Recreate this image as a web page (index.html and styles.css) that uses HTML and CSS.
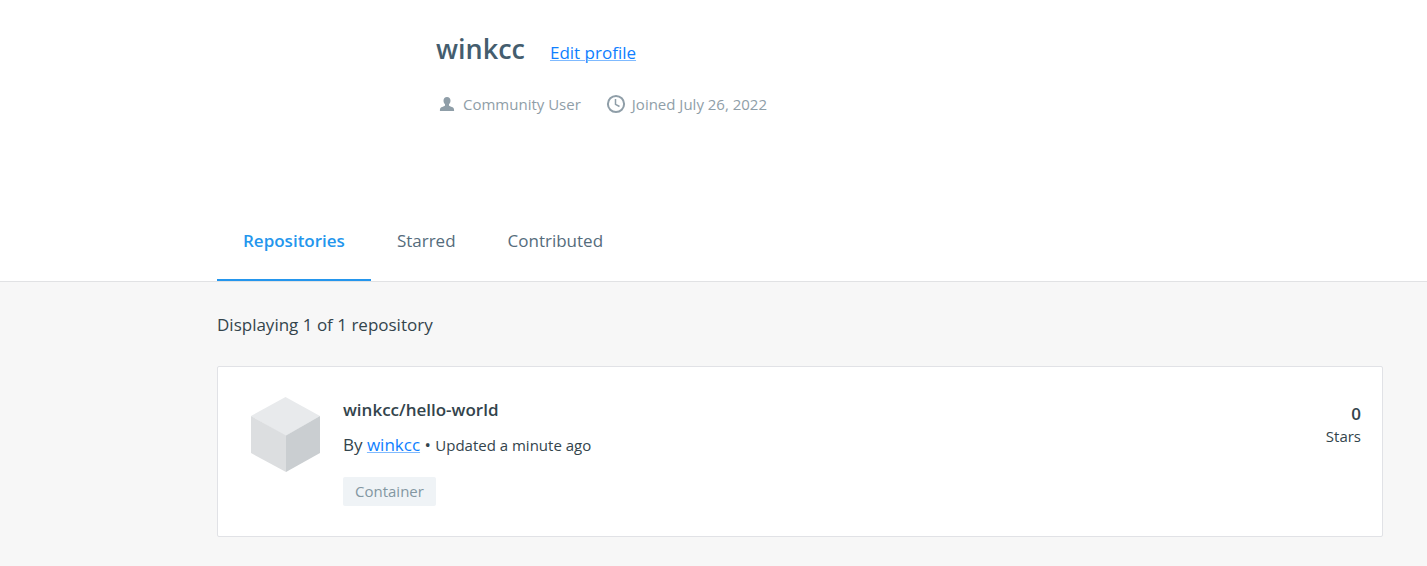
FILE: index.html
```html
<!DOCTYPE html>
<html lang="en">
<head>
<meta charset="utf-8">
<title>winkcc</title>
<link rel="stylesheet" href="styles.css">
</head>
<body>
<header class="profile">
  <div class="identity">
    <div class="title-row">
      <h1 class="username">winkcc</h1>
      <a class="link" href="#">Edit profile</a>
    </div>
    <div class="meta">
      <span class="meta-item">
        <svg class="user-icon" width="16" height="16" viewBox="0 0 16 16" aria-hidden="true"><path d="M8 1c-2.200 0-3.500 1.500-3.500 3.600 0 1.700.6 2.900 1.500 3.700v1.300c-.4.700-1.700 1-3 1.500C1.400 11.700.9 12.500.9 15h14.200c0-2.500-.5-3.300-2.100-3.900-1.300-.5-2.600-.8-3-1.500V8.300c.9-.8 1.500-2 1.500-3.700C11.500 2.500 10.200 1 8 1z"/></svg>
        Community User
      </span>
      <span class="meta-item">
        <svg class="clock-icon" width="20" height="20" viewBox="0 0 20 20" aria-hidden="true"><circle cx="10" cy="10" r="8.100"/><path class="hands" d="M9.500 5v5.300l4 2.200"/></svg>
        Joined July 26, 2022
      </span>
    </div>
  </div>
  <nav class="tabs">
    <a class="tab active" href="#" aria-current="page">Repositories</a>
    <a class="tab" href="#">Starred</a>
    <a class="tab" href="#">Contributed</a>
  </nav>
</header>
<main class="content">
  <p class="count">Displaying 1 of 1 repository</p>
  <article class="card">
    <svg class="cube" width="70" height="76" viewBox="0 0 70 76" aria-hidden="true"><path fill="#e8eaec" d="M34.500 0 69 19 34.500 39 0 19z"/><path fill="#dcdee0" d="M0 19 35 38.500V75L0 56z"/><path fill="#caced1" d="M69 19 35 38.500V75L69 56z"/></svg>
    <div class="details">
      <h2 class="repo-name">winkcc/hello-world</h2>
      <p class="byline">By <a class="link" href="#">winkcc</a> • <span class="updated">Updated a minute ago</span></p>
      <span class="tag">Container</span>
    </div>
    <div class="stars"><strong class="star-count">0</strong><span>Stars</span></div>
  </article>
</main>
</body>
</html>
```
FILE: styles.css
```css
* { box-sizing: border-box; }
body {
  margin: 0;
  min-height: 100vh;
  background: #f7f7f7;
  color: #33444c;
  font: 17px/24px "Open Sans", sans-serif;
}
h1, h2, p { margin: 0; }
.profile {
  background: #fff;
  border-bottom: 1px solid #e1e2e4;
  padding: 29px 44px 0 217px;
}
.identity { padding-left: 219px; }
.title-row { display: flex; align-items: baseline; gap: 25px; }
.username {
  color: #445d6e;
  font-size: 27px;
  line-height: 40px;
  font-weight: 600;
}
.link {
  color: #0f80ff;
  text-decoration: underline;
  text-decoration-color: #7fbaff;
  text-decoration-thickness: 1px;
  text-underline-offset: 1px;
}
.meta {
  display: flex;
  gap: 25px;
  padding: 23px 0 0 1px;
  color: #8f9ea8;
  font-size: 15px;
}
.meta-item { display: flex; align-items: center; gap: 6px; }
.user-icon { margin: 0 2px; fill: #8f9ea8; }
.clock-icon { fill: none; stroke: #8f9ea8; stroke-width: 2; }
.clock-icon .hands { stroke-width: 1.5; }
.tabs { display: flex; margin-top: 85px; }
.tab {
  padding: 28px 26px 26px;
  border-bottom: 2px solid transparent;
  color: #556c7c;
  text-decoration: none;
}
.tab.active {
  border-color: #2496ed;
  color: #2496ed;
  font-weight: 600;
}
.content { padding: 31px 44px 29px 217px; }
.card {
  display: flex;
  align-items: flex-start;
  margin-top: 29px;
  padding: 30px 21px 30px 33px;
  background: #fff;
  border: 1px solid #e1e2e6;
  border-radius: 2px;
}
.details { flex: 1; padding: 1px 0 0 22px; }
.repo-name { font-size: 17px; line-height: 24px; font-weight: 600; }
.byline { margin: 11px 0 20px; }
.updated { font-size: 15px; }
.tag {
  display: inline-block;
  padding: 0 12px;
  border-radius: 2px;
  background: #eff3f6;
  color: #8397a2;
  font-size: 15px;
  line-height: 29px;
}
.stars {
  display: flex;
  flex-direction: column;
  align-items: flex-end;
  padding-top: 6px;
  font-size: 15px;
  line-height: 22px;
}
.star-count { font-size: 17px; font-weight: 600; }
```
